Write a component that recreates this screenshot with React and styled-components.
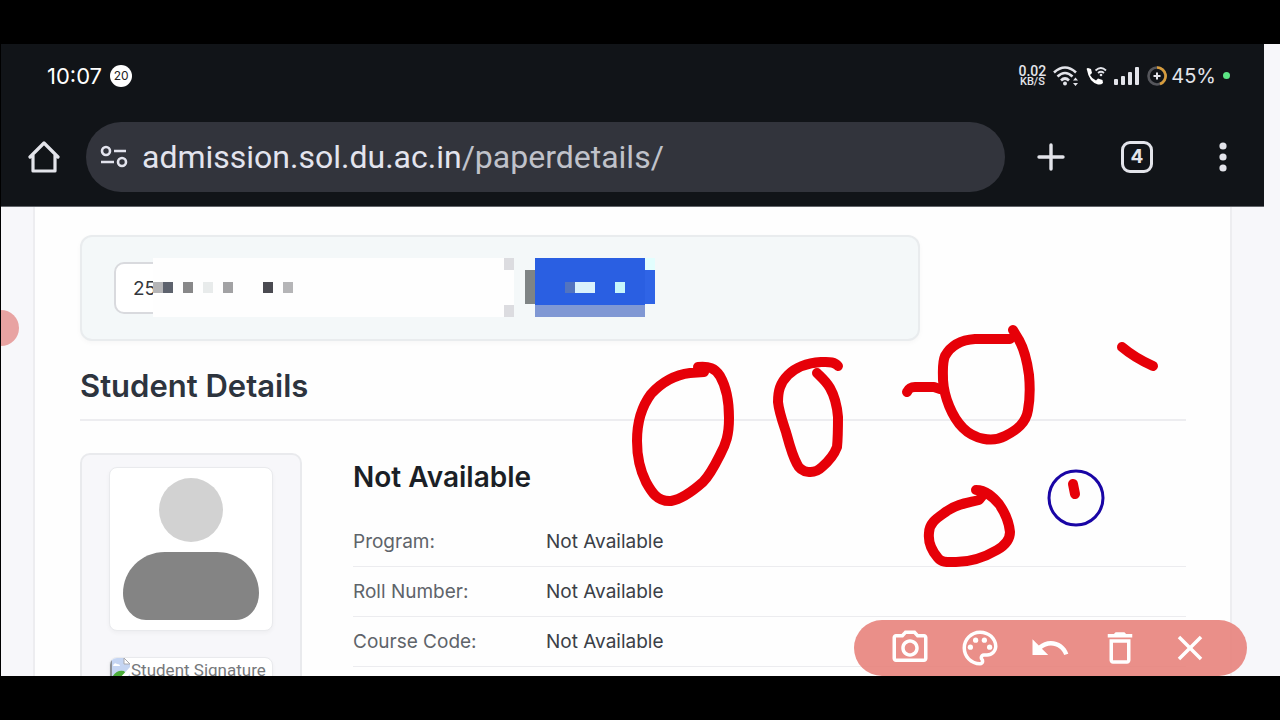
import styled, { createGlobalStyle } from 'styled-components';
import {
  MdClose,
  MdDeleteOutline,
  MdOutlinePalette,
  MdOutlinePhotoCamera,
  MdUndo,
} from 'react-icons/md';

const GlobalStyle = createGlobalStyle`
  *, *::before, *::after {
    box-sizing: border-box;
  }
  body {
    margin: 0;
    background: #000;
    font-family: Inter, 'Liberation Sans', sans-serif;
  }
  button, input {
    font: inherit;
  }
`;

const Frame = styled.div`
  position: relative;
  height: 100vh;
  padding: 44px 0;
  background: #000;
`;

const Screen = styled.div`
  position: relative;
  display: flex;
  flex-direction: column;
  height: 100%;
  margin-left: 1px;
  overflow: hidden;
  background: #f7f7fa;
`;

const BrowserChrome = styled.header`
  flex: none;
  margin-right: 16px;
  background: #111418;
  border-bottom: 1px solid #62656a;
  color: #e3e4ea;
`;

const StatusBar = styled.div`
  display: flex;
  align-items: center;
  justify-content: space-between;
  height: 63px;
  padding: 0 34px 0 46px;
  font-family: Roboto, sans-serif;
`;

const Clock = styled.div`
  display: flex;
  align-items: center;
  gap: 8px;
  color: #fff;
  font-family: Inter, sans-serif;
  font-size: 22px;
`;

const Count = styled.span`
  display: grid;
  place-items: center;
  width: 22px;
  height: 22px;
  border-radius: 50%;
  background: #fff;
  color: #222;
  font-size: 12px;
`;

const StatusIcons = styled.div`
  display: flex;
  align-items: center;
  gap: 7px;
`;

const Speed = styled.div`
  display: grid;
  text-align: center;
  font-size: 14px;
  font-weight: 500;
  line-height: 12px;

  & small {
    font-size: 11px;
    line-height: 10px;
  }
`;

const Battery = styled.div`
  display: flex;
  align-items: center;
  gap: 4px;
  font-family: Inter, sans-serif;
  font-size: 20px;
`;

const LiveDot = styled.span`
  width: 7px;
  height: 7px;
  border-radius: 50%;
  background: #5be584;
`;

const NavBar = styled.nav`
  display: flex;
  align-items: center;
  height: 99px;
  padding: 0 24px 0 26px;
`;

const IconButton = styled.button`
  display: grid;
  place-items: center;
  width: 34px;
  height: 48px;
  padding: 0;
  border: 0;
  background: none;
  color: inherit;
  cursor: pointer;
`;

const NavActions = styled.div`
  display: flex;
  gap: 52px;
  margin-left: 29px;
`;

const AddressBar = styled.div`
  display: flex;
  flex: 1;
  align-items: center;
  gap: 14px;
  height: 70px;
  margin-left: 25px;
  padding: 0 14px;
  border-radius: 35px;
  background: #32343c;
`;

const Address = styled.div`
  color: #c0c2ca;
  font-family: Roboto, sans-serif;
  font-size: 32px;
  line-height: 48px;
  white-space: nowrap;

  & b {
    color: #e3e4ee;
    font-weight: 400;
  }
`;

const Sheet = styled.main`
  flex: 1;
  min-height: 0;
  margin: 0 48px 0 32px;
  padding: 28px 44px 0 45px;
  border: solid #ededf0;
  border-width: 0 2px;
  background: #fefefe;
`;

const SearchPanel = styled.form`
  position: relative;
  display: flex;
  align-items: center;
  gap: 11px;
  max-width: 840px;
  height: 106px;
  padding: 0 32px;
  border: 2px solid #e9ecee;
  border-radius: 12px;
  background: #f4f8f9;
  box-shadow: 0 2px 5px rgba(0, 0, 0, 0.03);
`;

const RollInput = styled.input`
  width: 400px;
  height: 52px;
  padding: 0 17px;
  border: 2px solid #d9dade;
  border-radius: 10px;
  background: #fff;
  color: #33373d;
  font-size: 19px;
`;

const SearchButton = styled.button`
  width: 130px;
  height: 46px;
  border: 0;
  border-radius: 8px;
  background: #2a5fe2;
`;

const Mosaic = styled.svg`
  position: absolute;
  top: 21px;
  left: 71px;
`;

const SectionTitle = styled.h2`
  margin: 25px 0 0;
  padding-bottom: 13px;
  border-bottom: 2px solid #ededf0;
  color: #2d343e;
  font-size: 31px;
  font-weight: 600;
  line-height: 40px;
`;

const Student = styled.section`
  display: grid;
  grid-template-columns: 222px 1fr;
  gap: 51px;
  margin-top: 32px;
`;

const PhotoCard = styled.div`
  display: flex;
  flex-direction: column;
  align-items: center;
  gap: 26px;
  padding: 12px;
  border: 2px solid #e9eaed;
  border-radius: 10px;
  background: #f7f7fa;
`;

const PhotoBox = styled.div`
  width: 164px;
  height: ${props => props.$height}px;
  overflow: hidden;
  border: 1px solid #e9eaed;
  border-radius: 8px;
  background: #fff;
  box-shadow: 0 2px 4px rgba(0, 0, 0, 0.04);
`;

const Signature = styled.div`
  display: flex;
  align-items: flex-start;
  color: #75777a;
  font-family: Roboto, sans-serif;
  font-size: 17px;
  line-height: 24px;
  white-space: nowrap;

  & svg {
    flex: none;
  }
`;

const StudentName = styled.h3`
  margin: 4px 0 20px;
  color: #1b1f26;
  font-size: 28px;
  font-weight: 600;
  line-height: 40px;
`;

const Details = styled.dl`
  margin: 0;
`;

const DetailRow = styled.div`
  display: grid;
  grid-template-columns: 193px 1fr;
  align-items: center;
  height: 50px;
  border-bottom: 1px solid #ececef;
  font-size: 19px;

  & dt {
    color: #5f646a;
  }

  & dd {
    margin: 0;
    color: #3b4047;
  }
`;

const EdgeHandle = styled.div`
  position: absolute;
  top: 266px;
  left: -18px;
  width: 36px;
  height: 36px;
  border-radius: 50%;
  background: #e8a3a2;
`;

const Ink = styled.svg`
  position: absolute;
  top: 0;
  left: 0;
  pointer-events: none;
`;

const DrawToolbar = styled.div`
  position: absolute;
  right: 33px;
  bottom: 0;
  display: flex;
  align-items: center;
  gap: 28px;
  height: 56px;
  padding: 0 36px 0 35px;
  border-radius: 28px;
  background: rgba(231, 127, 121, 0.88);
`;

const ToolButton = styled.button`
  display: grid;
  width: 42px;
  height: 42px;
  padding: 0;
  border: 0;
  background: none;
  color: #fff;
  font-size: 42px;
  cursor: pointer;
`;

const details = [
  ['Program:', 'Not Available'],
  ['Roll Number:', 'Not Available'],
  ['Course Code:', 'Not Available'],
];

const tools = [
  ['Capture', MdOutlinePhotoCamera],
  ['Colour', MdOutlinePalette],
  ['Undo', MdUndo],
  ['Delete', MdDeleteOutline],
  ['Close', MdClose],
];

// x, y, width, height, colour
const tiles = [
  [0, 0, 361, 59, '#fefefe'],
  [361, 0, 21, 59, '#f4f8f9'],
  [351, 0, 10, 12, '#dcdce0'],
  [351, 47, 10, 12, '#dcdce0'],
  [0, 24, 10, 11, '#b5b5b7'],
  [10, 24, 10, 11, '#5d626d'],
  [30, 24, 10, 11, '#888889'],
  [50, 24, 10, 11, '#e8ebeb'],
  [70, 24, 10, 11, '#a2a2a4'],
  [110, 24, 10, 11, '#4a4a51'],
  [130, 24, 10, 11, '#b5b5b7'],
  [372, 0, 130, 59, '#f4f8f9'],
  [372, 12, 10, 34, '#7f8485'],
  [382, 0, 110, 47, '#2a5fe2'],
  [492, 12, 10, 34, '#2f64e6'],
  [492, 0, 10, 12, '#e2fefe'],
  [382, 47, 110, 12, '#8098d4'],
  [412, 24, 10, 11, '#5274bf'],
  [422, 24, 20, 11, '#daf2fc'],
  [462, 24, 10, 11, '#c6f6fb'],
];

const WifiIcon = () => (
  <svg width="26" height="22" viewBox="0 0 26 22" fill="none" stroke="currentColor" strokeWidth="2.6">
    <path d="M1 7.500Q12 -2.500 23 7.500M4.500 11.500Q12 4.500 19.500 11.500M8 15.500Q12 11.500 16 15.500" />
    <circle cx="12" cy="18.500" r="2" fill="currentColor" stroke="none" />
    <path d="M20 15.500L22.500 12.500L25 15.500ZM20 18L22.500 21L25 18Z" fill="currentColor" stroke="none" />
  </svg>
);

const CallIcon = () => (
  <svg width="21" height="20" viewBox="0 0 21 20" fill="none">
    <path
      d="M1 4Q0 2 2 2L5 3L6 7L4 9Q6 13 10 14.500L12 12.500L16.500 14L17 17Q15 19 12 18.500Q3 16 1 4Z"
      fill="#fff"
    />
    <path d="M9.500 4.500Q15 -0.500 20 4.500M12 7Q15 4.500 18 7" stroke="currentColor" strokeWidth="1.8" />
    <circle cx="15" cy="9" r="1.300" fill="currentColor" />
  </svg>
);

const SignalIcon = () => (
  <svg width="26" height="18" viewBox="0 0 26 18" fill="currentColor">
    <rect x="0" y="12" width="4" height="6" rx="1" />
    <rect x="7" y="9" width="4" height="9" rx="1" />
    <rect x="14" y="5" width="4" height="13" rx="1" />
    <rect x="21" y="0" width="4" height="18" rx="1" />
  </svg>
);

const BatteryIcon = () => (
  <svg width="20" height="20" viewBox="0 0 20 20" fill="none">
    <circle cx="10" cy="10" r="8.500" stroke="#55565b" strokeWidth="2.600" />
    <path d="M10 1.500A8.500 8.500 0 0 1 13 18" stroke="#d79c3c" strokeWidth="2.600" />
    <path d="M10 6.500V13.500M6.500 10H13.500" stroke="#e3e4ea" strokeWidth="2" />
  </svg>
);

const HomeIcon = () => (
  <svg width="32" height="34" viewBox="0 0 32 34" fill="none" stroke="currentColor" strokeWidth="3.200" strokeLinecap="round" strokeLinejoin="round">
    <path d="M2 17L16 3L30 17M5 15V31H27V15" />
  </svg>
);

const TuneIcon = () => (
  <svg width="28" height="24" viewBox="0 0 28 24" fill="none" stroke="#e3e4ee" strokeWidth="2.600">
    <circle cx="6" cy="6" r="4" />
    <circle cx="22" cy="17" r="4" />
    <path d="M14 6H26M1 17H14" />
  </svg>
);

const PlusIcon = () => (
  <svg width="28" height="28" viewBox="0 0 28 28" stroke="currentColor" strokeWidth="3.400" strokeLinecap="round">
    <path d="M14 2V26M2 14H26" />
  </svg>
);

const TabCount = styled.span`
  display: grid;
  place-items: center;
  width: 32px;
  height: 32px;
  border: 3px solid currentColor;
  border-radius: 9px;
  font-size: 19px;
  font-weight: 700;
`;

const DotsIcon = () => (
  <svg width="8" height="30" viewBox="0 0 8 30" fill="currentColor">
    <circle cx="4" cy="4" r="3.600" />
    <circle cx="4" cy="15" r="3.600" />
    <circle cx="4" cy="26" r="3.600" />
  </svg>
);

const Avatar = () => (
  <svg width="162" height="162" viewBox="-1 -1 162 162">
    <circle cx="80" cy="41" r="32" fill="#d2d2d2" />
    <path d="M54 83H106C130 83 148 102 148 124C148 139 138 151 125 151H35C22 151 12 139 12 124C12 102 30 83 54 83Z" fill="#848484" />
  </svg>
);

const BrokenImageIcon = () => (
  <svg width="21" height="22" viewBox="0 0 21 22">
    <path d="M0 0H14L20 6V22H0Z" fill="#c5d5f2" />
    <path d="M14 0V6H20Z" fill="#fff" stroke="#a8a8ad" />
    <path d="M3 8Q4 4 7 6Q10 6 10 8Z" fill="#fff" />
    <path d="M1 21Q6 11 14 13L20 21Z" fill="#4cad3a" />
    <path d="M21 8L8 22H14L21 15Z" fill="#fff" />
    <path d="M1 22V1" stroke="#8d9095" strokeWidth="2" />
  </svg>
);

const InkStrokes = () => (
  <Ink width="1280" height="720" viewBox="0 0 1280 720" fill="none" aria-hidden="true">
    <g stroke="#e60008" strokeWidth="10" strokeLinecap="round" strokeLinejoin="round">
      <path d="M698 367C709 366 715 368 720 376C727 388 729 402 729 418C729 435 726 444 720 455C715 465 710 475 703 482C694 490 682 499 671 501C657 502 651 491 646 482C640 470 637 455 637 441C637 421 642 406 651 394C661 383 674 375 690 373L704 372L703 367" />
      <path d="M838 366C834 361 828 362 821 362C807 363 796 367 788 375C780 383 778 391 778 402C779 412 783 423 786 432C789 443 792 455 797 464C801 473 814 475 822 467C829 461 834 455 837 447C838 437 838 428 838 417C837 405 834 395 830 388C826 381 821 377 817 373" />
      <path d="M907 392C909 388 911 387 915 387H934L940 389" />
      <path d="M1010 339H975C960 340 950 347 945 356C942 363 943 371 943 380C944 397 952 417 963 428C974 439 992 443 1005 436C1017 430 1026 423 1028 410C1030 399 1030 386 1029 375C1027 360 1024 349 1019 340L1013 330" />
      <path d="M1122 347Q1135 358 1153 366" />
      <path d="M976 490C986 490 993 497 999 504C1006 514 1009 522 1010 532C1010 540 1004 546 997 550C985 557 970 562 956 562C948 562 942 563 938 558C932 551 928 542 929 533C929 522 939 517 947 511C957 504 967 503 979 500L983 495" />
      <path d="M1073 484L1075 494" />
    </g>
    <circle cx="1076" cy="498" r="27" stroke="#1905a5" strokeWidth="3" />
  </Ink>
);

const App = () => {
  return (
    <Frame>
      <GlobalStyle />
      <Screen>
        <BrowserChrome>
          <StatusBar>
            <Clock>
              10:07
              <Count>20</Count>
            </Clock>
            <StatusIcons>
              <Speed>
                <span>0.02</span>
                <small>KB/S</small>
              </Speed>
              <WifiIcon />
              <CallIcon />
              <SignalIcon />
              <Battery>
                <BatteryIcon />
                45%
              </Battery>
              <LiveDot />
            </StatusIcons>
          </StatusBar>
          <NavBar>
            <IconButton aria-label="Home">
              <HomeIcon />
            </IconButton>
            <AddressBar>
              <TuneIcon />
              <Address>
                <b>admission.sol.du.ac.in</b>/paperdetails/
              </Address>
            </AddressBar>
            <NavActions>
              <IconButton aria-label="New tab">
                <PlusIcon />
              </IconButton>
              <IconButton aria-label="Tabs">
                <TabCount>4</TabCount>
              </IconButton>
              <IconButton aria-label="More">
                <DotsIcon />
              </IconButton>
            </NavActions>
          </NavBar>
        </BrowserChrome>

        <Sheet>
          <SearchPanel>
            <RollInput aria-label="Roll number" defaultValue="25" />
            <SearchButton type="button" aria-label="Search" />
            <Mosaic width="502" height="59" shapeRendering="crispEdges" aria-hidden="true">
              {tiles.map(([x, y, width, height, fill]) => (
                <rect key={`${x}-${y}-${width}`} x={x} y={y} width={width} height={height} fill={fill} />
              ))}
            </Mosaic>
          </SearchPanel>

          <SectionTitle>Student Details</SectionTitle>
          <Student>
            <PhotoCard>
              <PhotoBox $height={164}>
                <Avatar />
              </PhotoBox>
              <PhotoBox $height={60}>
                <Signature>
                  <BrokenImageIcon />
                  Student Signature
                </Signature>
              </PhotoBox>
            </PhotoCard>
            <div>
              <StudentName>Not Available</StudentName>
              <Details>
                {details.map(([label, value]) => (
                  <DetailRow key={label}>
                    <dt>{label}</dt>
                    <dd>{value}</dd>
                  </DetailRow>
                ))}
              </Details>
            </div>
          </Student>
        </Sheet>

        <EdgeHandle />
        <DrawToolbar>
          {tools.map(([name, Icon]) => (
            <ToolButton key={name} aria-label={name}>
              <Icon />
            </ToolButton>
          ))}
        </DrawToolbar>
      </Screen>
      <InkStrokes />
    </Frame>
  );
};

export default App;
